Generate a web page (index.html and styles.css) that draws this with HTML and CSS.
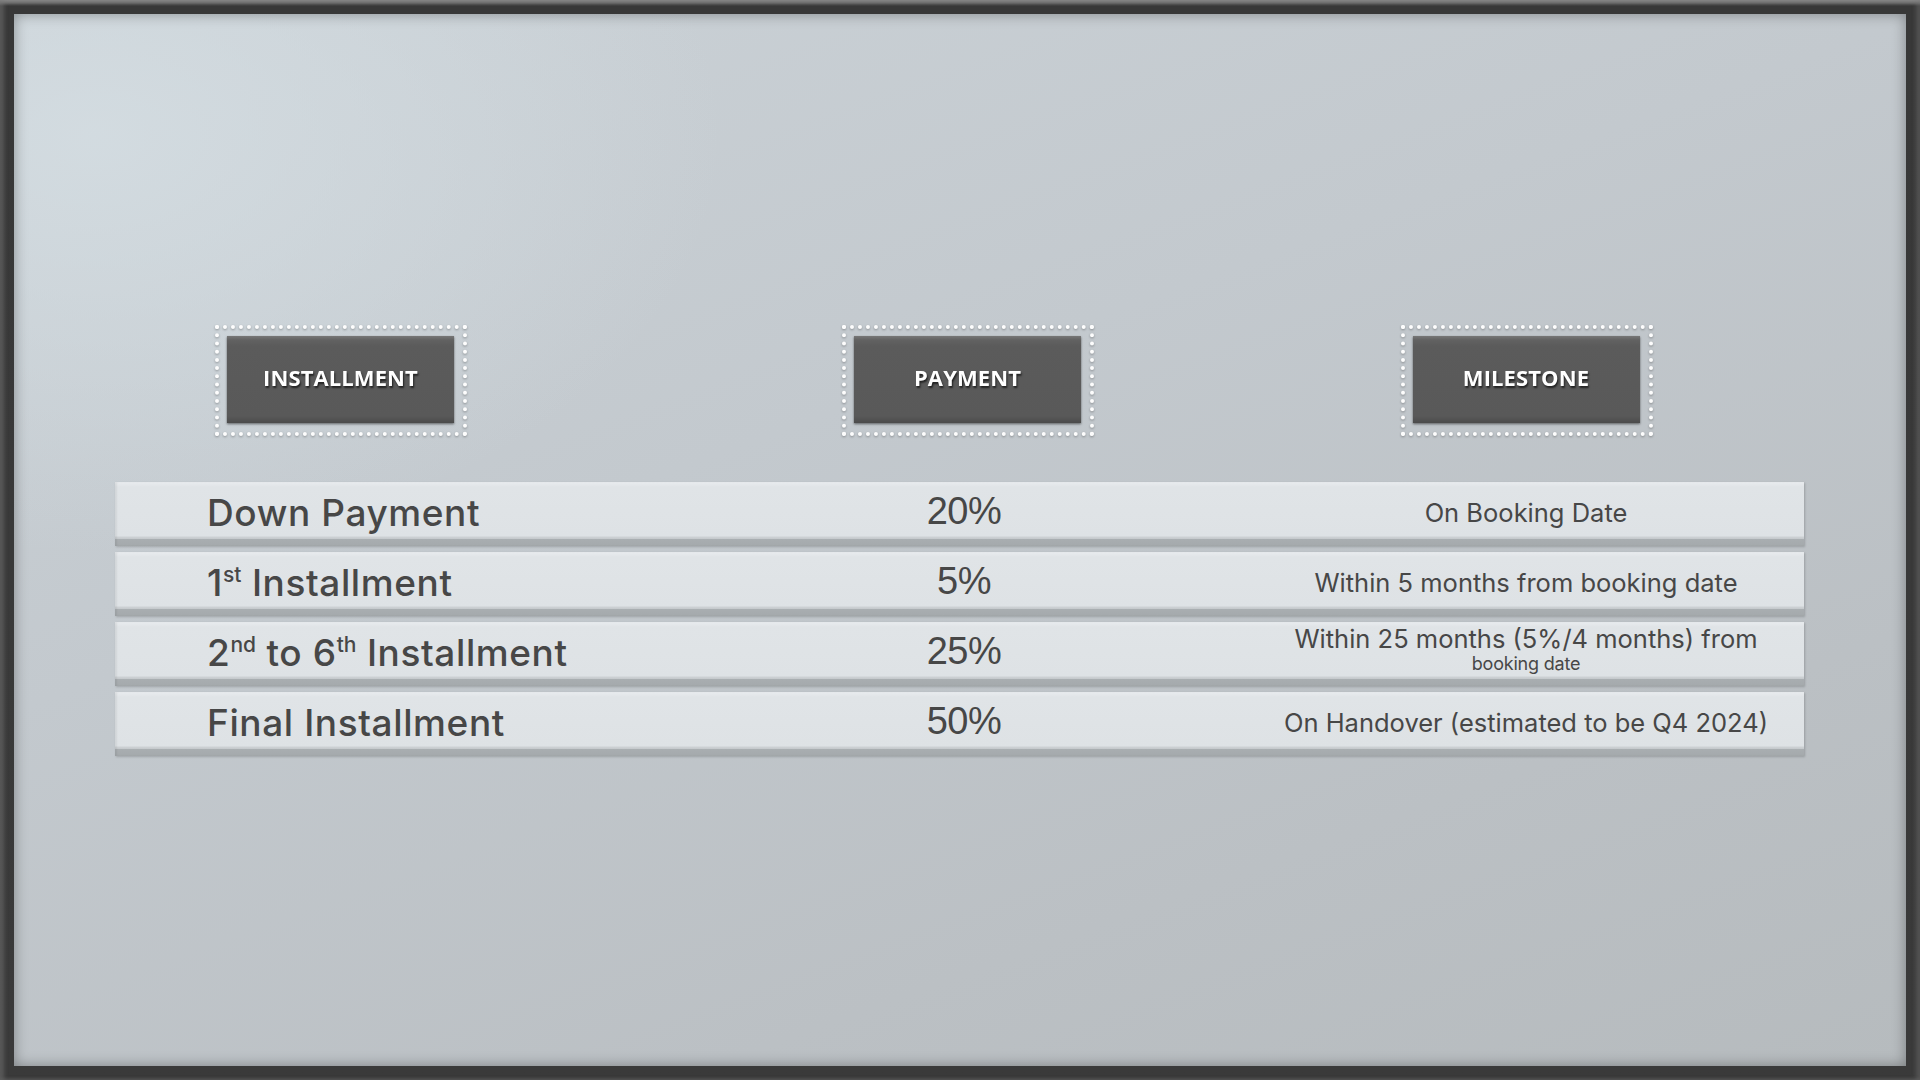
FILE: index.html
```html
<!DOCTYPE html>
<html lang="en">
<head>
<meta charset="utf-8">
<title>Payment Plan</title>
<link rel="stylesheet" href="styles.css">
</head>
<body>
<div class="frame">
  <div class="panel">
    <div class="plan">
      <div class="heads">
        <div class="hbox h1"><div class="hbtn">INSTALLMENT</div></div>
        <div class="hbox h2"><div class="hbtn">PAYMENT</div></div>
        <div class="hbox h3"><div class="hbtn">MILESTONE</div></div>
      </div>
      <div class="rows">
        <div class="row">
          <div class="c1">Down Payment</div>
          <div class="c2">20%</div>
          <div class="c3">On Booking Date</div>
        </div>
        <div class="row">
          <div class="c1">1<sup>st</sup> Installment</div>
          <div class="c2">5%</div>
          <div class="c3">Within 5 months from booking date</div>
        </div>
        <div class="row">
          <div class="c1">2<sup>nd</sup> to 6<sup>th</sup> Installment</div>
          <div class="c2">25%</div>
          <div class="c3 two"><span class="l1">Within 25 months (5%/4 months) from</span><span class="l2">booking date</span></div>
        </div>
        <div class="row">
          <div class="c1">Final Installment</div>
          <div class="c2">50%</div>
          <div class="c3">On Handover (estimated to be Q4 2024)</div>
        </div>
      </div>
    </div>
  </div>
</div>
</body>
</html>
```
FILE: styles.css
```css
* { box-sizing: border-box; }
html, body { margin: 0; padding: 0; }
body {
  width: 1920px;
  height: 1080px;
  overflow: hidden;
  font-family: "Inter", "Open Sans", sans-serif;
  background: #3a3a3a;
}
.frame {
  width: 1920px;
  height: 1080px;
  padding: 14px;
  background: linear-gradient(to bottom, #8e8e8e 0, #6a6a6a 3px, #383838 6px, #3a3a3a 100%);
  box-shadow: inset 4px 0 4px rgba(120,120,120,.5), inset -4px 0 4px rgba(120,120,120,.4);
}
.panel {
  width: 100%;
  height: 100%;
  background:
    radial-gradient(ellipse 900px 600px at 80px 120px, rgba(212,221,226,.85), rgba(212,221,226,0) 70%),
    linear-gradient(160deg, #cbd2d7 0%, #c3c9ce 40%, #bbc0c4 75%, #b6bbbe 100%);
  box-shadow: inset 0 0 14px rgba(0,0,0,.35);
  padding: 311px 0 0 101px;
}
.plan { width: 1689px; }
.heads {
  display: grid;
  grid-template-columns: 560px 578px 1fr;
  align-items: start;
}
.hbox {
  width: 252px;
  border: 4px dotted #fdfdfd;
  padding: 7px 9px 9px 8px;
  justify-self: center;
  filter: drop-shadow(0 1px 1px rgba(0,0,0,.3));
}
.h1 { justify-self: start; margin-left: 100px; }
.h2 { margin-left: 8px; }
.h3 { margin-right: 4px; }
.hbtn {
  height: 87px;
  padding-bottom: 5px;
  background: linear-gradient(to bottom, #777 0, #626262 4px, #5b5b5b 10px, #595959 80px, #4b4b4b 87px);
  box-shadow: 0 1px 2px rgba(0,0,0,.25);
  color: #fff;
  font-family: "Open Sans", "Inter", sans-serif;
  font-weight: 700;
  font-size: 22px;
  letter-spacing: 0.1px;
  display: flex;
  align-items: center;
  justify-content: center;
  text-shadow: 1px 2px 2px rgba(0,0,0,.65);
}
.rows { margin-top: 46px; }
.row {
  display: grid;
  grid-template-columns: 560px 578px 1fr;
  align-items: center;
  height: 64px;
  margin-bottom: 6px;
  padding-bottom: 8px;
  color: #474747;
  background: linear-gradient(to bottom, #e9ecef 0, #e0e4e7 5px, #dee2e5 54px, #cdd1d4 55px, #c4c8cb 57px, #a9aeb1 57px, #a4a9ac 64px);
  box-shadow: 1px 1px 2px rgba(0,0,0,.18), inset 2px 0 2px rgba(0,0,0,.06);
}
.c1 {
  padding-left: 92px;
  font-size: 37px;
  font-weight: 500;
  letter-spacing: 0.6px;
  white-space: nowrap;
  padding-top: 4px;
}
.c1 sup {
  font-size: 21px;
  vertical-align: 0;
  position: relative;
  top: -14px;
  letter-spacing: 0;
}
.c2 {
  text-align: center;
  font-family: "Liberation Sans", "Inter", sans-serif;
  font-size: 38px;
  letter-spacing: -0.5px;
  padding-top: 2px;
}
.c3 {
  text-align: center;
  font-size: 25.5px;
  font-weight: 400;
  letter-spacing: 0;
  white-space: nowrap;
  padding-top: 4px;
  padding-right: 5px;
}
.c3.two {
  display: flex;
  flex-direction: column;
  align-items: center;
  padding-top: 0;
}
.c3 .l1 { line-height: 26px; }
.c3 .l2 { font-size: 18px; line-height: 20px; letter-spacing: -0.2px; margin-top: 2px; }
```
